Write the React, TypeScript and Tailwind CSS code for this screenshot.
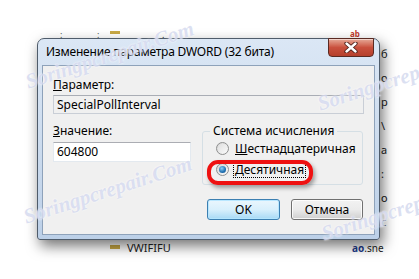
const font = { fontFamily: '"Noto Sans", "Liberation Sans", sans-serif' }

const Radio = ({ checked }: { checked?: boolean }) => (
  <span className="flex h-[13px] w-[13px] items-center justify-center rounded-full border border-[#8e8f8f] bg-gradient-to-br from-[#d5d5d5] to-[#fbfbfb]">
    {checked ? (
      <span className="h-[7px] w-[7px] rounded-full bg-[radial-gradient(circle_at_40%_35%,#8fd0f5,#1f6fb0_60%,#0c4f8c)]" />
    ) : (
      <span className="h-[9px] w-[9px] rounded-full bg-gradient-to-br from-[#e0e0e0] to-[#f8f8f8]" />
    )}
  </span>
)

const CloseIcon = () => (
  <svg width="14" height="11" viewBox="0 0 14 11">
    <path d="M2.5 1.5 L11.5 9.5 M11.5 1.5 L2.5 9.5" stroke="#4a1e17" strokeWidth="4.2" strokeLinecap="round" />
    <path d="M2.5 1.5 L11.5 9.5 M11.5 1.5 L2.5 9.5" stroke="#ffffff" strokeWidth="2.4" strokeLinecap="round" />
  </svg>
)

const Watermark = ({ className }: { className: string }) => (
  <span
    className={`pointer-events-none absolute whitespace-nowrap text-[21px] font-bold italic text-[#c4cbe9]/60 ${className}`}
    style={{ fontFamily: '"Liberation Serif", serif', textShadow: "0 0 2px #fff" }}
  >
    Soringpcrepair.Com
  </span>
)

export default function App() {
  return (
    <div className="relative h-[279px] w-[419px] overflow-hidden bg-white text-[12px] text-black" style={font}>
      {/* things behind the dialog */}
      <div className="absolute left-[60px] top-[28px] text-[9px] text-[#555]">:</div>
      <div className="absolute left-[97px] top-[28px] text-[9px] text-[#555]">:</div>
      <div className="absolute left-[110px] top-[31px] h-[3px] w-[10px] bg-[#c9a945]" />
      <div className="absolute left-[162px] top-[28px] text-[9px] text-[#333]">.</div>
      <div className="absolute left-[350px] top-[30px] text-[8px] font-bold leading-none text-[#c0392b]">ab</div>
      <div className="absolute left-[381px] top-[48px] flex flex-col gap-[13px] text-[11px] leading-none text-[#222]">
        <span>б</span>
        <span>о</span>
        <span>р</span>
        <span>\</span>
        <span>а</span>
        <span>:</span>
        <span>о</span>
        <span>с</span>
      </div>
      <div className="absolute left-[127px] top-[240px] text-[11px] text-[#222]">VWIFIFU</div>
      <div className="absolute left-[110px] top-[245px] h-[4px] w-[10px] bg-[#c9a945]" />
      <div className="absolute left-[352px] top-[241px] text-[10px] text-[#222]">
        <span className="font-bold text-[#1d3c8c]">ao</span>.sne
      </div>

      {/* dialog */}
      <div className="relative z-10 ml-[37px] mt-[38px] flex h-[202px] w-[343px] flex-col rounded-t-[7px] rounded-b-[3px] border border-[#4f5c6b] bg-gradient-to-b from-[#dbe7f5] via-[#cddcee] to-[#bcd0e8] px-[4px] pb-[4px] shadow-[3px_6px_14px_rgba(0,0,0,0.55)]">
        <div className="flex h-[26px] items-start justify-between">
          <span className="pl-[4px] pt-[6px] leading-[14px] tracking-[-0.2px]">Изменение параметра DWORD (32 бита)</span>
          <div className="-mt-px mr-px flex h-[19px] w-[46px] items-center justify-center rounded-b-[4px] border border-[#5a2a22] bg-gradient-to-b from-[#e5a998] via-[#c9503d] to-[#b5402c] shadow-[inset_0_1px_0_rgba(255,255,255,0.5)]">
            <CloseIcon />
          </div>
        </div>

        <div className="flex flex-1 flex-col border border-[#8ea2ba] bg-[#f0f0f0] px-[10px]">
          <div className="pt-[12px] leading-[14px]">
            <u>П</u>араметр:
          </div>
          <div className="mt-[3px] flex h-[19px] items-center border border-[#c9ced6] border-t-[#a9adb5] bg-[#f0f0f0] pl-[3px]">
            SpecialPollInterval
          </div>

          <div className="mt-[10px] flex items-start justify-between">
            <div className="flex w-[138px] flex-col">
              <div className="leading-[14px]">
                <u>З</u>начение:
              </div>
              <div className="mt-[4px] flex h-[20px] items-center border border-[#e3e9ef] border-t-[#abadb3] bg-white pl-[3px]">
                604800
              </div>
            </div>
            <fieldset className="mr-px w-[161px] rounded-[3px] border border-[#d5dfe5] px-0 pb-[4px] pt-0">
              <legend className="ml-[7px] px-[3px] leading-[14px]">Система исчисления</legend>
              <div className="flex h-[21px] items-center gap-[6px] pl-[13px]">
                <Radio />
                <span>
                  <u>Ш</u>естнадцатеричная
                </span>
              </div>
              <div className="flex h-[21px] items-center gap-[4px] pl-[13px]">
                <Radio checked />
                <span className="border border-dotted border-black px-px leading-[14px]">
                  <u>Д</u>есятичная
                </span>
              </div>
            </fieldset>
          </div>

          <div className="mt-[14px] flex justify-end gap-[11px] pr-px">
            <div className="flex h-[21px] w-[73px] items-center justify-center rounded-[3px] border border-[#3c7fb1] bg-gradient-to-b from-[#eaf6fd] via-[#d9f0fc] to-[#a7d9f5] shadow-[inset_0_0_0_1px_rgba(180,230,255,0.9)]">
              OK
            </div>
            <div className="flex h-[21px] w-[72px] items-center justify-center rounded-[3px] border border-[#707070] bg-gradient-to-b from-[#f2f2f2] via-[#ebebeb] to-[#cfcfcf] shadow-[inset_0_0_0_1px_rgba(255,255,255,0.8)]">
              Отмена
            </div>
          </div>
        </div>
      </div>

      {/* red highlight */}
      <div className="absolute left-[207px] top-[160px] z-20 h-[25px] w-[106px] rounded-[11px] border-4 border-[#ee1111] shadow-[2px_3px_4px_rgba(0,0,0,0.35)]" />

      {/* watermarks */}
      <Watermark className="left-[22px] top-[40px] z-30 -rotate-[18deg]" />
      <Watermark className="left-[20px] top-[175px] z-30 -rotate-[18deg]" />
      <Watermark className="left-[314px] top-[62px] z-30 -rotate-[18deg]" />
      <Watermark className="left-[318px] top-[192px] z-30 -rotate-[18deg]" />
    </div>
  )
}
